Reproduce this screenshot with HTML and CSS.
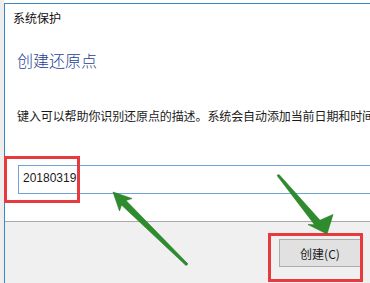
FILE: index.html
```html
<!DOCTYPE html>
<html lang="zh-CN">
<head>
    <meta charset="UTF-8">
    <meta name="viewport" content="width=device-width, initial-scale=1.0">
    <title>系统保护</title>
    <link rel="stylesheet" href="styles.css">
</head>
<body>
    <div class="screen">
        <div class="side-strip"></div>
        <div class="window">
            <div class="window-title">系统保护</div>
            <div class="window-body">
                <div class="heading">创建还原点</div>
                <div class="desc">键入可以帮助你识别还原点的描述。系统会自动添加当前日期和时间。</div>
                <div class="input-box"><span class="input-text">20180319</span><span class="caret"></span></div>
            </div>
            <div class="footer">
                <button class="btn">创建(C)</button>
            </div>
        </div>

        <!-- annotations drawn over the screenshot -->
        <div class="mark mark-input"></div>
        <div class="mark mark-button"></div>
        <svg class="arrows" width="370" height="283" viewBox="0 0 370 283">
            <polygon points="113,192 132,198.5 126,200.5 188,264 186,265.5 121.5,205 119.5,211" />
            <polygon points="327,234 308,224.5 314.6,224.8 277,175.5 279,174.5 320,220.2 333,214.5" />
        </svg>
    </div>
</body>
</html>
```

FILE: styles.css
```css
body {
    margin: 0;
    width: 370px;
    height: 283px;
    overflow: hidden;
    background: #fff;
    font-family: "Noto Sans CJK SC", "Liberation Sans", sans-serif;
    color: #1a1a1a;
}

.screen {
    position: relative;
    display: flex;
    height: 283px;
}

.side-strip {
    width: 4px;
    background: #eeeeee;
}

.window {
    flex: 1;
    display: flex;
    flex-direction: column;
    margin-top: 3px;
    border-top: 1px solid #3a87c8;
    border-left: 1px solid #3a87c8;
    min-width: 0;
    overflow: hidden;
}

.window-title {
    font-size: 12px;
    line-height: 16px;
    padding: 6px 0 0 8px;
    color: #111;
}

.window-body {
    flex: 1;
    padding-left: 12px;
    white-space: nowrap;
}

.heading {
    margin-top: 24px;
    font-size: 16px;
    font-weight: 300;
    line-height: 20px;
    color: #1e3f94;
}

.desc {
    margin-top: 38px;
    font-size: 12px;
    line-height: 16px;
    letter-spacing: -0.1px;
}

.input-box {
    display: flex;
    align-items: center;
    margin: 41px 0 0 1px;
    width: 400px;
    height: 27px;
    border: 1px solid #6fa3d6;
    padding-left: 4px;
    box-sizing: content-box;
}

.input-text {
    font-family: "Liberation Sans", sans-serif;
    font-size: 12px;
    line-height: 14px;
    margin-top: -3px;
}

.caret {
    width: 2px;
    height: 15px;
    margin: -3px 0 0 1px;
    background: #222;
}

.footer {
    height: 61px;
    border-top: 1px solid #a8a8a8;
    background: #f0f0f0;
    display: flex;
    justify-content: flex-end;
    align-items: flex-start;
    padding-right: 9px;
}

.btn {
    margin-top: 17px;
    width: 82px;
    height: 28px;
    border: 1px solid #adadad;
    background: #e1e1e1;
    font-family: "Noto Sans CJK SC", "Liberation Sans", sans-serif;
    font-size: 12px;
    color: #1a1a1a;
    padding: 0;
}

.mark {
    position: absolute;
    border: 3px solid #e63a3f;
    box-sizing: border-box;
}

.mark-input {
    left: 4px;
    top: 156px;
    width: 76px;
    height: 47px;
}

.mark-button {
    left: 268px;
    top: 233px;
    width: 95px;
    height: 49px;
}

.arrows {
    position: absolute;
    left: 0;
    top: 0;
    pointer-events: none;
}

.arrows polygon {
    fill: #2e8b2e;
    stroke: #257a25;
    stroke-width: 0.6;
}
```
